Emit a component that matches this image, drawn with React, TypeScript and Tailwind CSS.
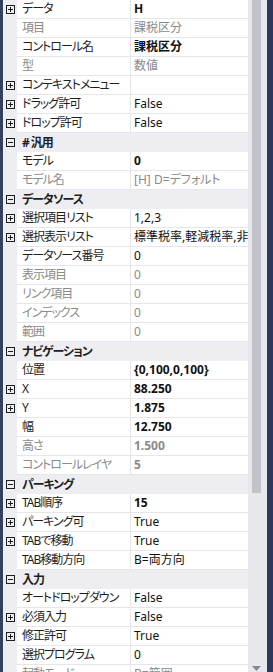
type Row =
  | { kind: "cat"; label: string }
  | { kind: "prop"; name: string; value: string; expand?: boolean; bold?: boolean; dim?: boolean };

const rows: Row[] = [
  { kind: "prop", name: "データ", value: "H", expand: true, bold: true },
  { kind: "prop", name: "項目", value: "課税区分", dim: true },
  { kind: "prop", name: "コントロール名", value: "課税区分", bold: true },
  { kind: "prop", name: "型", value: "数値", dim: true },
  { kind: "prop", name: "コンテキストメニュー", value: "", expand: true },
  { kind: "prop", name: "ドラッグ許可", value: "False", expand: true },
  { kind: "prop", name: "ドロップ許可", value: "False", expand: true },
  { kind: "cat", label: "# 汎用" },
  { kind: "prop", name: "モデル", value: "0", bold: true },
  { kind: "prop", name: "モデル名", value: "[H] D=デフォルト", dim: true },
  { kind: "cat", label: "データソース" },
  { kind: "prop", name: "選択項目リスト", value: "1,2,3", expand: true },
  { kind: "prop", name: "選択表示リスト", value: "標準税率,軽減税率,非課税", expand: true },
  { kind: "prop", name: "データソース番号", value: "0" },
  { kind: "prop", name: "表示項目", value: "0", dim: true },
  { kind: "prop", name: "リンク項目", value: "0", dim: true },
  { kind: "prop", name: "インデックス", value: "0", dim: true },
  { kind: "prop", name: "範囲", value: "0", dim: true },
  { kind: "cat", label: "ナビゲーション" },
  { kind: "prop", name: "位置", value: "{0,100,0,100}", bold: true },
  { kind: "prop", name: "X", value: "88.250", expand: true, bold: true },
  { kind: "prop", name: "Y", value: "1.875", expand: true, bold: true },
  { kind: "prop", name: "幅", value: "12.750", bold: true },
  { kind: "prop", name: "高さ", value: "1.500", bold: true, dim: true },
  { kind: "prop", name: "コントロールレイヤ", value: "5", bold: true, dim: true },
  { kind: "cat", label: "パーキング" },
  { kind: "prop", name: "TAB順序", value: "15", expand: true, bold: true },
  { kind: "prop", name: "パーキング可", value: "True", expand: true },
  { kind: "prop", name: "TABで移動", value: "True", expand: true },
  { kind: "prop", name: "TAB移動方向", value: "B=両方向" },
  { kind: "cat", label: "入力" },
  { kind: "prop", name: "オートドロップダウン", value: "False" },
  { kind: "prop", name: "必須入力", value: "False", expand: true },
  { kind: "prop", name: "修正許可", value: "True", expand: true },
  { kind: "prop", name: "選択プログラム", value: "0" },
  { kind: "prop", name: "起動モード", value: "B=範囲", dim: true },
];

function Box({ plus }: { plus: boolean }) {
  return (
    <svg width="9" height="9" viewBox="0 0 9 9" className="block">
      <rect x="0.5" y="0.5" width="8" height="8" fill="none" stroke="#1e1e1e" />
      <path d="M2 4.5h5" stroke="#1e1e1e" />
      {plus && <path d="M4.5 2v5" stroke="#1e1e1e" />}
    </svg>
  );
}

export default function App() {
  return (
    <div
      className="flex w-[273px] h-[672px] overflow-hidden bg-[#eeeef2] text-[12px] text-[#1e1e1e] [font-feature-settings:'palt']"
      style={{ fontFamily: '"Noto Sans", "Noto Sans CJK JP", sans-serif' }}
    >
      <div className="w-[3px] shrink-0 bg-[#34405c]" />

      {/* property grid */}
      <div className="w-[245px] shrink-0 flex flex-col">
        {rows.map((row, i) =>
          row.kind === "cat" ? (
            <div key={i} className="flex h-[19px] shrink-0 items-center bg-[#eeeef2]">
              <div className="w-[14px] flex justify-center pl-[1px]">
                <Box plus={false} />
              </div>
              <span className="pl-[5px] font-bold leading-[19px] tracking-[-1px] whitespace-pre">{row.label}</span>
            </div>
          ) : (
            <div key={i} className="flex h-[19px] shrink-0">
              <div className="w-[14px] flex items-center justify-center pl-[1px] bg-[#eeeef2]">
                {row.expand && <Box plus />}
              </div>
              <div
                className={`w-[113px] bg-white border-b border-[#e6e6ea] pl-[5px] leading-[18px] tracking-[-1px] whitespace-nowrap overflow-hidden ${
                  row.dim ? "text-[#8a8a8a]" : ""
                }`}
              >
                {row.name}
              </div>
              <div
                className={`flex-1 bg-white border-b border-l border-[#e6e6ea] pl-[3px] leading-[18px] whitespace-nowrap overflow-hidden ${
                  row.bold ? "font-bold" : ""
                } ${row.dim ? "text-[#8a8a8a]" : "text-[#111]"}`}
              >
                {row.value}
              </div>
            </div>
          )
        )}
      </div>

      {/* scrollbar */}
      <div className="w-[19px] shrink-0 flex flex-col bg-[#e8e8ec] pl-[4px] pr-[6px]">
        <div className="h-[493px] bg-[#c2c3c9]" />
        <div className="flex-1 flex items-end justify-center pb-[1px]">
          <svg width="9" height="5" viewBox="0 0 9 5">
            <path d="M0 0h9L4.5 5z" fill="#868999" />
          </svg>
        </div>
      </div>

      <div className="w-[6px] shrink-0 bg-[#2b3a5c]" />
    </div>
  );
}
